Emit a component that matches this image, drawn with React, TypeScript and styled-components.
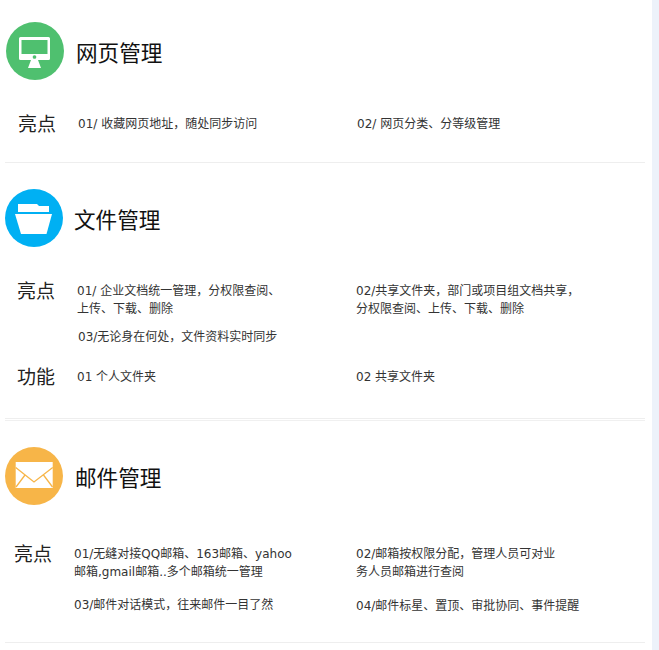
import React from 'react';
import styled, { createGlobalStyle } from 'styled-components';

const GlobalStyle = createGlobalStyle`
  html, body {
    margin: 0;
    padding: 0;
    background: #edf2fa;
  }
  body {
    font-family: "DejaVu Sans", "Noto Sans CJK SC", sans-serif;
    color: #333;
  }
`;

const MonitorIcon = () => (
  <svg viewBox="0 0 58 58" width="58" height="58">
    <circle cx="29" cy="29" r="29" fill="#4fc06f" />
    <path
      fill="#fff"
      fillRule="evenodd"
      d="M14.5 15h28a1.5 1.5 0 0 1 1.5 1.5v20a1.5 1.5 0 0 1-1.5 1.5H32l3 8H22l3-8H14.5a1.5 1.5 0 0 1-1.5-1.5v-20a1.500 1.500 0 0 1 1.500-1.500zM15.500 18v14h26V18zM28.500 33.200a1.800 1.800 0 1 0 0.010 0z"
    />
  </svg>
);

const FolderIcon = () => (
  <svg viewBox="0 0 58 58" width="58" height="58">
    <circle cx="29" cy="29" r="29" fill="#00b0f3" />
    <path fill="#fff" d="M13 15h19l2 2h10v6H13z" />
    <path fill="#fff" d="M10 25h37l-5.500 20H16z" />
  </svg>
);

const MailIcon = () => (
  <svg viewBox="0 0 58 58" width="58" height="58">
    <circle cx="29" cy="29" r="29" fill="#f7b548" />
    <rect x="10.700" y="15" width="37" height="26" fill="#fff" />
    <path
      fill="none"
      stroke="#f7b548"
      strokeWidth="1.300"
      d="M10.700 20.500L29 35l18.700-14.500M20 28L11 40M38.500 28l9 12"
    />
  </svg>
);

const Panel = styled.main`
  width: 645px;
  height: 650px;
  padding-right: 7px;
  background: #fff;
  overflow: hidden;
`;

const Section = styled.section<{ $top: number; $double?: boolean; $height?: number }>`
  margin-left: 5px;
  padding-top: ${(p) => p.$top}px;
  border-bottom: 1px solid #eeeeee;
  ${(p) => p.$height && `height: ${p.$height}px;`}
  ${(p) =>
    p.$double &&
    `
    box-shadow: 0 1px 0 #fff, 0 2px 0 #f0f0f0;
    margin-bottom: 2px;
  `}
`;

const Header = styled.header<{ $left: number; $gap: number; $after: number }>`
  display: flex;
  align-items: center;
  gap: ${(p) => p.$gap}px;
  padding-left: ${(p) => p.$left}px;
  margin-bottom: ${(p) => p.$after}px;
`;

const Badge = styled.div`
  width: 58px;
  height: 58px;
  flex: none;
  svg {
    display: block;
  }
`;

const Title = styled.h2`
  margin: 6px 0 0;
  font-size: 21.6px;
  font-weight: 400;
  line-height: 30px;
  color: #111;
`;

const Row = styled.div<{ $left: number; $first: number; $after?: number }>`
  display: grid;
  grid-template-columns: 60px ${(p) => p.$first}px 1fr;
  padding-left: ${(p) => p.$left}px;
  margin-bottom: ${(p) => p.$after ?? 0}px;
`;

const Label = styled.h3`
  margin: 0;
  font-size: 19px;
  font-weight: 400;
  line-height: 18px;
  color: #222;
`;

const Column = styled.div<{ $gap?: number }>`
  display: flex;
  flex-direction: column;
  gap: ${(p) => p.$gap ?? 0}px;
`;

const Item = styled.p<{ $indent?: number }>`
  margin: 0 0 0 ${(p) => p.$indent ?? 0}px;
  font-size: 12px;
  line-height: 18px;
  color: #333;
  white-space: nowrap;
`;

export default function App() {
  return (
    <>
      <GlobalStyle />
      <Panel>
        <Section $top={22} $height={140}>
          <Header $left={1} $gap={12} $after={35}>
            <Badge><MonitorIcon /></Badge>
            <Title>网页管理</Title>
          </Header>
          <Row $left={13} $first={279}>
            <Label>亮点</Label>
            <Item>01/ 收藏网页地址，随处同步访问</Item>
            <Item>02/ 网页分类、分等级管理</Item>
          </Row>
        </Section>

        <Section $top={26} $double>
          <Header $left={0} $gap={11} $after={35}>
            <Badge><FolderIcon /></Badge>
            <Title>文件管理</Title>
          </Header>
          <Row $left={12} $first={279} $after={22}>
            <Label>亮点</Label>
            <Column $gap={10}>
              <Item>
                01/ 企业文档统一管理，分权限查阅、
                <br />
                上传、下载、删除
              </Item>
              <Item $indent={1}>03/无论身在何处，文件资料实时同步</Item>
            </Column>
            <Item>
              02/共享文件夹，部门或项目组文档共享，
              <br />
              分权限查阅、上传、下载、删除
            </Item>
          </Row>
          <Row $left={12} $first={279} $after={32}>
            <Label>功能</Label>
            <Item>01 个人文件夹</Item>
            <Item>02 共享文件夹</Item>
          </Row>
        </Section>

        <Section $top={26}>
          <Header $left={0} $gap={12} $after={40}>
            <Badge><MailIcon /></Badge>
            <Title>邮件管理</Title>
          </Header>
          <Row $left={9} $first={282} $after={27}>
            <Label>亮点</Label>
            <Column $gap={15}>
              <Item>
                01/无缝对接QQ邮箱、163邮箱、yahoo
                <br />
                邮箱,gmail邮箱..多个邮箱统一管理
              </Item>
              <Item>03/邮件对话模式，往来邮件一目了然</Item>
            </Column>
            <Column $gap={16}>
              <Item>
                02/邮箱按权限分配，管理人员可对业
                <br />
                务人员邮箱进行查阅
              </Item>
              <Item>04/邮件标星、置顶、审批协同、事件提醒</Item>
            </Column>
          </Row>
        </Section>
      </Panel>
    </>
  );
}
